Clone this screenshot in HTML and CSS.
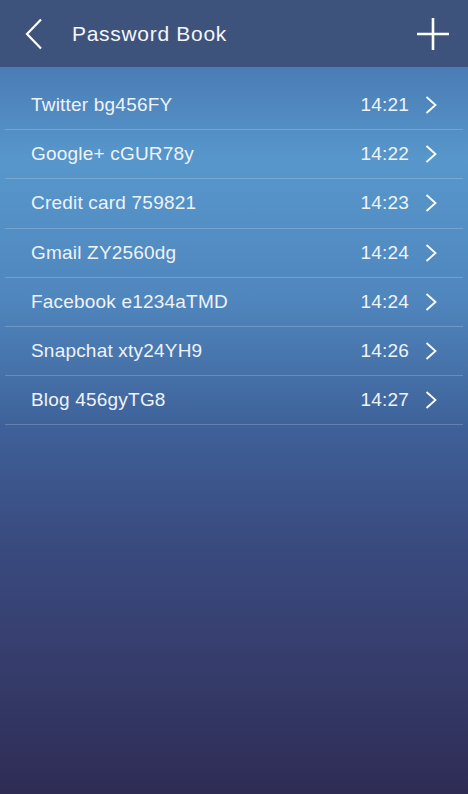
FILE: index.html
```html
<!DOCTYPE html>
<html>
<head>
<meta charset="utf-8">
<link rel="stylesheet" href="styles.css">
</head>
<body>
<div class="screen">
  <header class="bar">
    <svg class="back" width="20" height="32" viewBox="0 0 20 32"><polyline points="17,1.5 3,16 17,30.5" fill="none" stroke="#fff" stroke-width="2.2"/></svg>
    <h1 class="title">Password Book</h1>
    <svg class="plus" width="34" height="34" viewBox="0 0 34 34"><path d="M17 1V33M1 17H33" stroke="#fff" stroke-width="2.6" fill="none"/></svg>
  </header>
  <ul class="list">
    <li class="row"><span class="name">Twitter bg456FY</span><span class="time">14:21</span><svg class="chev" width="12" height="18" viewBox="0 0 12 18"><polyline points="1.5,1 10.5,9 1.5,17" fill="none" stroke="#fff" stroke-width="1.8"/></svg></li>
    <li class="row"><span class="name">Google+ cGUR78y</span><span class="time">14:22</span><svg class="chev" width="12" height="18" viewBox="0 0 12 18"><polyline points="1.5,1 10.5,9 1.5,17" fill="none" stroke="#fff" stroke-width="1.8"/></svg></li>
    <li class="row"><span class="name">Credit card 759821</span><span class="time">14:23</span><svg class="chev" width="12" height="18" viewBox="0 0 12 18"><polyline points="1.5,1 10.5,9 1.5,17" fill="none" stroke="#fff" stroke-width="1.8"/></svg></li>
    <li class="row"><span class="name">Gmail ZY2560dg</span><span class="time">14:24</span><svg class="chev" width="12" height="18" viewBox="0 0 12 18"><polyline points="1.5,1 10.5,9 1.5,17" fill="none" stroke="#fff" stroke-width="1.8"/></svg></li>
    <li class="row"><span class="name">Facebook e1234aTMD</span><span class="time">14:24</span><svg class="chev" width="12" height="18" viewBox="0 0 12 18"><polyline points="1.5,1 10.5,9 1.5,17" fill="none" stroke="#fff" stroke-width="1.8"/></svg></li>
    <li class="row"><span class="name">Snapchat xty24YH9</span><span class="time">14:26</span><svg class="chev" width="12" height="18" viewBox="0 0 12 18"><polyline points="1.5,1 10.5,9 1.5,17" fill="none" stroke="#fff" stroke-width="1.8"/></svg></li>
    <li class="row"><span class="name">Blog 456gyTG8</span><span class="time">14:27</span><svg class="chev" width="12" height="18" viewBox="0 0 12 18"><polyline points="1.5,1 10.5,9 1.5,17" fill="none" stroke="#fff" stroke-width="1.8"/></svg></li>
  </ul>
</div>
</body>
</html>
```
FILE: styles.css
```css
html, body {
  margin: 0;
  padding: 0;
}
body {
  width: 468px;
  height: 794px;
  overflow: hidden;
  font-family: "Liberation Sans", Arial, sans-serif;
  color: #fff;
}
.screen {
  height: 794px;
  display: flex;
  flex-direction: column;
  background: linear-gradient(to bottom, #4a7db5 68px, #5797cb 160px, #4f86bd 300px, #3e6098 430px, #3a4b80 540px, #363d6c 660px, #2e2c55 794px);
}
.bar {
  height: 67px;
  flex: none;
  background: #3e537c;
  display: flex;
  align-items: center;
  padding: 0 18px 0 24px;
}
.back {
  display: block;
  margin-right: 28px;
}
.title {
  margin: 0;
  flex: 1;
  font-size: 21px;
  font-weight: normal;
  letter-spacing: 0.7px;
  line-height: 1;
  color: #f4f6fa;
}
.plus {
  display: block;
}
.list {
  list-style: none;
  margin: 0;
  padding: 14px 5px 0;
}
.row {
  height: 48.2px;
  border-bottom: 1px solid rgba(255, 255, 255, 0.2);
  display: flex;
  align-items: center;
  padding: 0 26px 0 26px;
  font-size: 19px;
  letter-spacing: 0.2px;
  color: #eef3f9;
}
.name {
  flex: 1;
}
.time {
  margin-right: 16px;
}
.chev {
  display: block;
}
```
